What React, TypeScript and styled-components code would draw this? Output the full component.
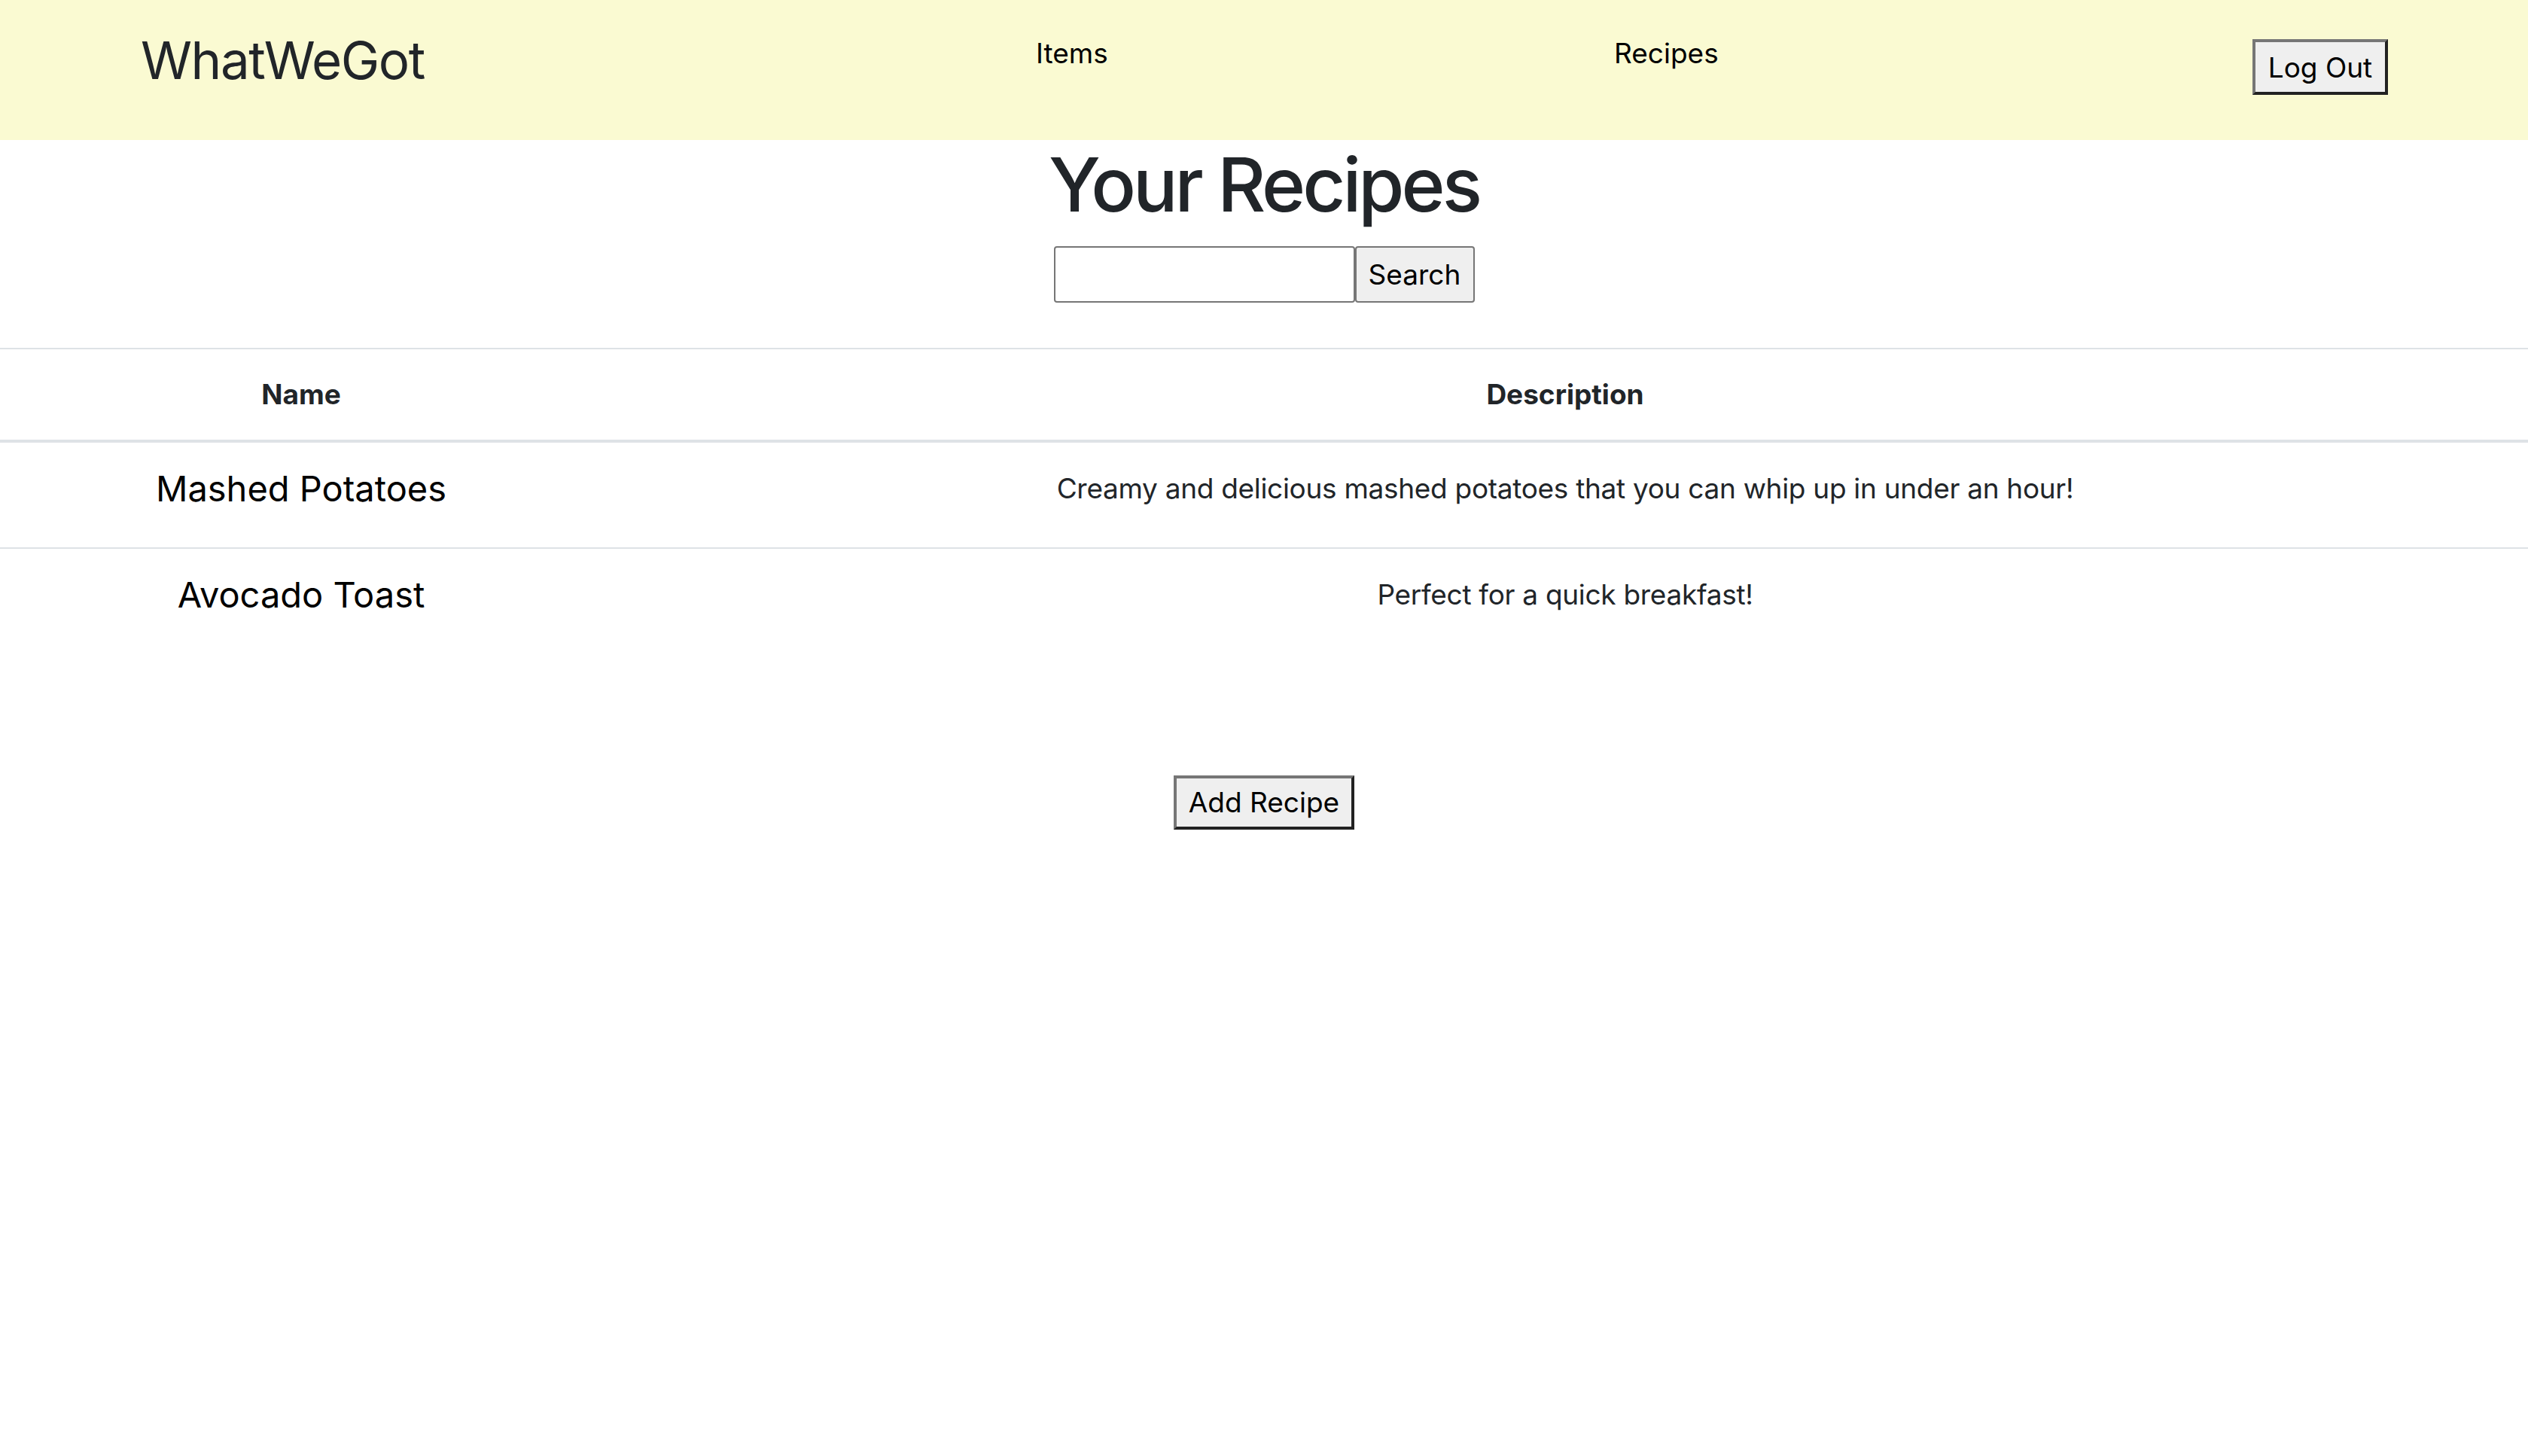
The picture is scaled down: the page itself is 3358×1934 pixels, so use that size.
import React from "react";
import styled, { createGlobalStyle } from "styled-components";

const GlobalStyle = createGlobalStyle`
  html, body {
    margin: 0;
    padding: 0;
    background: #ffffff;
  }
  body {
    font-family: Inter, "Noto Sans", "Liberation Sans", sans-serif;
    color: #212529;
  }
  * { box-sizing: border-box; }
`;

const Header = styled.header`
  height: 186px;
  background: #fafad2;
  display: grid;
  grid-template-columns: 1189px 768px 848px auto;
  align-items: start;
  padding: 46px 0 0 187px;
`;

const Brand = styled.div`
  font-size: 69px;
  line-height: 1;
  letter-spacing: -1.4px;
  color: #212529;
  white-space: nowrap;
`;

const NavLink = styled.a`
  margin-top: 6px;
  font-size: 37px;
  line-height: 1;
  color: #000;
  text-decoration: none;
  white-space: nowrap;
  justify-self: start;
`;

const BevelButton = styled.button<{ $w: number; $h: number }>`
  width: ${(p) => p.$w}px;
  height: ${(p) => p.$h}px;
  padding: 0;
  background: #efefef;
  border-style: solid;
  border-width: 4px;
  border-color: #767676 #222222 #222222 #767676;
  font-family: Inter, "Noto Sans", sans-serif;
  font-size: 37px;
  line-height: 1;
  color: #000;
  display: flex;
  align-items: center;
  justify-content: center;
`;

const LogOutWrap = styled.div`
  margin-top: 6px;
  justify-self: start;
`;

const Main = styled.main`
  display: flex;
  flex-direction: column;
  align-items: center;
`;

const Title = styled.h1`
  margin: 10px 0 0;
  font-size: 99px;
  line-height: 1;
  letter-spacing: -4px;
  font-weight: 500;
  color: #212529;
`;

const SearchForm = styled.form`
  margin-top: 32px;
  display: flex;
  align-items: stretch;
  height: 75px;
`;

const SearchInput = styled.input`
  width: 400px;
  height: 75px;
  border: 2px solid #767676;
  border-radius: 4px;
  background: #fff;
  font-size: 37px;
  padding: 0 8px;
`;

const SearchButton = styled.button`
  width: 159px;
  height: 75px;
  border: 2px solid #767676;
  border-radius: 4px;
  background: #efefef;
  font-family: Inter, "Noto Sans", sans-serif;
  font-size: 37px;
  color: #000;
  padding: 0;
`;

const Table = styled.table`
  margin-top: 60px;
  width: 100%;
  border-collapse: collapse;
  border-top: 2px solid #dee2e6;
`;

const HeadCell = styled.th<{ $w?: number }>`
  width: ${(p) => (p.$w ? `${p.$w}px` : "auto")};
  padding: 33px 0;
  font-size: 37px;
  line-height: 1.46;
  font-weight: 700;
  color: #212529;
  text-align: center;
  border-bottom: 4px solid #dee2e6;
`;

const Row = styled.tr<{ $last?: boolean }>`
  border-bottom: ${(p) => (p.$last ? "none" : "2px solid #dee2e6")};
`;

const Cell = styled.td`
  vertical-align: top;
  text-align: center;
  padding: 33px 0 0;
`;

const RecipeName = styled.h4`
  margin: 0 0 50px;
  font-size: 47px;
  line-height: 1.2;
  font-weight: 400;
  color: #000;
`;

const Description = styled.p`
  margin: 0;
  font-size: 37px;
  line-height: 1.5;
  letter-spacing: -0.3px;
  color: #212529;
`;

const Footer = styled.div`
  margin-top: 161px;
  display: flex;
  justify-content: center;
`;

const recipes = [
  {
    name: "Mashed Potatoes",
    description:
      "Creamy and delicious mashed potatoes that you can whip up in under an hour!",
  },
  { name: "Avocado Toast", description: "Perfect for a quick breakfast!" },
];

export default function App() {
  return (
    <>
      <GlobalStyle />
      <Header>
        <Brand>WhatWeGot</Brand>
        <NavLink href="#">Items</NavLink>
        <NavLink href="#">Recipes</NavLink>
        <LogOutWrap>
          <BevelButton $w={180} $h={74}>Log Out</BevelButton>
        </LogOutWrap>
      </Header>
      <Main>
        <Title>Your Recipes</Title>
        <SearchForm onSubmit={(e) => e.preventDefault()}>
          <SearchInput type="text" />
          <SearchButton type="submit">Search</SearchButton>
        </SearchForm>
      </Main>
      <Table>
        <thead>
          <tr>
            <HeadCell $w={800}>Name</HeadCell>
            <HeadCell>Description</HeadCell>
          </tr>
        </thead>
        <tbody>
          {recipes.map((r, i) => (
            <Row key={r.name} $last={i === recipes.length - 1}>
              <Cell>
                <RecipeName>{r.name}</RecipeName>
              </Cell>
              <Cell>
                <Description>{r.description}</Description>
              </Cell>
            </Row>
          ))}
        </tbody>
      </Table>
      <Footer>
        <BevelButton $w={240} $h={72}>Add Recipe</BevelButton>
      </Footer>
    </>
  );
}
